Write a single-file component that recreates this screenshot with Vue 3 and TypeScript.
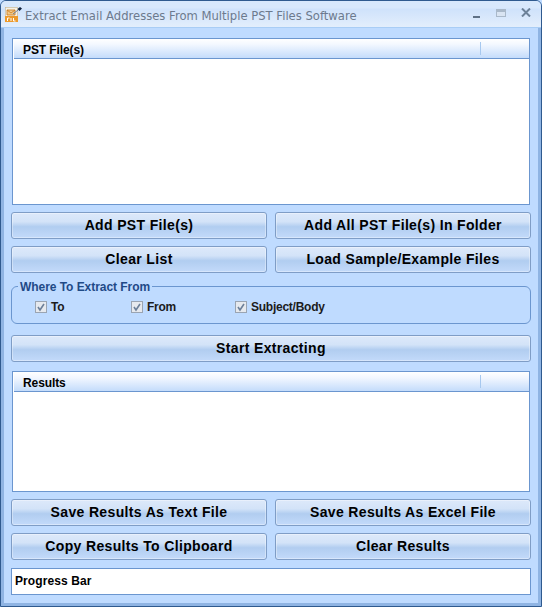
<script setup lang="ts">
const topButtons: string[] = ['Add PST File(s)', 'Add All PST File(s) In Folder', 'Clear List', 'Load Sample/Example Files']
const bottomButtons: string[] = ['Save Results As Text File', 'Save Results As Excel File', 'Copy Results To Clipboard', 'Clear Results']
const checks = [
  { label: 'To', cls: 'c1' },
  { label: 'From', cls: 'c2' },
  { label: 'Subject/Body', cls: 'c3' },
]
</script>

<template>
  <div class="window">
    <div class="titlebar">
      <svg class="appicon" width="18" height="16" viewBox="0 0 18 16">
        <rect x="0.500" y="0.500" width="12" height="14" fill="#f6f1e4" stroke="#c9b48c" stroke-width="0.6" />
        <rect x="0" y="9" width="13" height="6" fill="#ec9a2c" />
        <path d="M2 3h8v5H2z" fill="#f3c987" stroke="#c87a20" stroke-width="0.8" />
        <path d="M2 3l4 3 4-3" fill="none" stroke="#c87a20" stroke-width="0.8" />
        <path d="M2.500 14v-3h2M6 14v-3M8.500 11v3h2" fill="none" stroke="#fff" stroke-width="1" />
        <path d="M8 7L13 3" stroke="#6a7f9c" stroke-width="1" />
        <path d="M12.500 2l2.500-2 2 1.500-2.500 2.500z" fill="#10233f" />
      </svg>
      <span class="title">Extract Email Addresses From Multiple PST Files Software</span>
      <div class="controls">
        <svg class="min" width="8" height="9" viewBox="0 0 8 9"><rect x="0" y="7" width="7" height="2" fill="#5f7186" /></svg>
        <svg class="max" width="10" height="8" viewBox="0 0 10 8"><rect x="0.500" y="0.500" width="9" height="7" fill="#d9e4f2" stroke="#a9b8c9" /><rect x="1" y="1" width="8" height="2" fill="#a9b8c9" /></svg>
        <svg class="close" width="10" height="9" viewBox="0 0 10 9"><path d="M1 .5L9 8.500M9 .5L1 8.500" stroke="#6c8198" stroke-width="2" fill="none" /></svg>
      </div>
    </div>
    <div class="body">
      <div class="listbox first">
        <div class="listhead"><span>PST File(s)</span><i></i></div>
      </div>
      <div class="btngrid g1">
        <button v-for="b in topButtons" :key="b" class="btn">{{ b }}</button>
      </div>
      <fieldset class="group">
        <legend>Where To Extract From</legend>
        <label v-for="c in checks" :key="c.label" class="check" :class="c.cls">
          <svg width="12" height="12" viewBox="0 0 12 12">
            <rect x="0.500" y="0.500" width="11" height="11" fill="#e6e9ee" stroke="#9aa4b2" />
            <path d="M3 6l2 3 4-6" fill="none" stroke="#6c7f99" stroke-width="1.600" />
          </svg>
          <span>{{ c.label }}</span>
        </label>
      </fieldset>
      <button class="btn wide">Start Extracting</button>
      <div class="listbox second">
        <div class="listhead results"><span>Results</span><i></i></div>
      </div>
      <div class="btngrid g2">
        <button v-for="b in bottomButtons" :key="b" class="btn">{{ b }}</button>
      </div>
      <div class="progress">Progress Bar</div>
    </div>
  </div>
</template>

<style>
html, body { margin: 0; background: #bfdbff; }
</style>

<style scoped>
.window {
  box-sizing: border-box;
  width: 542px;
  height: 607px;
  display: flex;
  flex-direction: column;
  border: 1px solid #2f5a8f;
  border-radius: 6px 6px 0 0;
  background: #bfdbff;
  font-family: "Liberation Sans", Arial, sans-serif;
  overflow: hidden;
}
.titlebar {
  height: 27px;
  flex: none;
  display: flex;
  align-items: center;
  padding: 3px 10px 0 4px;
  box-sizing: border-box;
  background: linear-gradient(#d8e8fc 0, #d8e8fc 7px, #cfe2fb 8px, #e3eefc 100%);
  border-bottom: 1px solid #a9cdf5;
}
.appicon { flex: none; margin-top: -2px; }
.title {
  margin-left: 2px;
  font-family: "DejaVu Sans", sans-serif;
  font-size: 11.6px;
  color: #6c7a8e;
  white-space: nowrap;
}
.controls {
  margin-left: auto;
  display: flex;
  gap: 15px;
  align-items: flex-start;
  margin-top: -6px;
}
.min { margin-top: 1px; }
.max { margin-top: 1px; }
.body {
  flex: 1;
  display: flex;
  flex-direction: column;
  padding: 10px 7px 0 7px;
  border-left: 3px solid #8fb4e3;
  border-right: 3px solid #8fb4e3;
  border-bottom: 3px solid #8fb4e3;
  background: #bfdbff;
  box-sizing: border-box;
}
.listbox {
  box-sizing: border-box;
  background: #fff;
  border: 1px solid #6b96cf;
  margin: 0 1px;
}
.first { height: 167px; }
.second { height: 121px; margin-top: 9px; }
.listhead {
  height: 20px;
  margin: 0 0 0 1px;
  box-sizing: border-box;
  display: flex;
  align-items: center;
  padding: 3px 0 0 9px;
  font-size: 12px;
  font-weight: 700;
  letter-spacing: -0.100px;
  color: #000;
  background: linear-gradient(#fff, #f2f7ff 30%, #c4dcfb);
  border-bottom: 1px solid #6b96cf;
  position: relative;
}
.listhead i {
  position: absolute;
  right: 48px;
  top: 3px;
  bottom: 3px;
  width: 1px;
  background: #a6c8ef;
}
.btngrid {
  display: grid;
  grid-template-columns: 256px 256px;
  column-gap: 8px;
  row-gap: 7px;
}
.g1 { margin-top: 7px; }
.g2 { margin-top: 7px; }
.btn {
  box-sizing: border-box;
  height: 27px;
  padding: 0 0 2px;
  border: 1px solid #7f9dc6;
  border-radius: 3px;
  background: linear-gradient(#dde9fa 0, #d3e3f8 35%, #b1cdf0 55%, #c3dafa 100%);
  box-shadow: inset 0 0 0 1px rgba(255, 255, 255, 0.35);
  font-family: "Liberation Sans", Arial, sans-serif;
  font-size: 14px;
  font-weight: 700;
  letter-spacing: 0.350px;
  color: #000;
}
.wide { width: 520px; margin-top: 11px; }
.group {
  box-sizing: border-box;
  margin: 5px 0 0;
  padding: 0;
  height: 46px;
  border: 1px solid #6b96cf;
  border-radius: 6px;
  display: block;
  position: relative;
}
.group legend {
  margin-left: 6px;
  padding: 2px 2px 0;
  font-size: 12px;
  font-weight: 700;
  letter-spacing: -0.050px;
  color: #1f4a87;
  line-height: 14px;
}
.check {
  position: absolute;
  top: 6px;
  display: flex;
  align-items: center;
  gap: 4px;
  font-size: 12px;
  font-weight: 700;
  letter-spacing: -0.250px;
  color: #1c1c1c;
  line-height: 14px;
}
.c1 { left: 23px; }
.c2 { left: 119px; }
.c3 { left: 223px; }
.progress {
  box-sizing: border-box;
  height: 27px;
  width: 520px;
  margin-top: 8px;
  padding: 0 0 1px 3px;
  display: flex;
  align-items: center;
  background: #fff;
  border: 1px solid #6b96cf;
  font-size: 12px;
  font-weight: 700;
  letter-spacing: 0.100px;
  color: #000;
}
</style>
